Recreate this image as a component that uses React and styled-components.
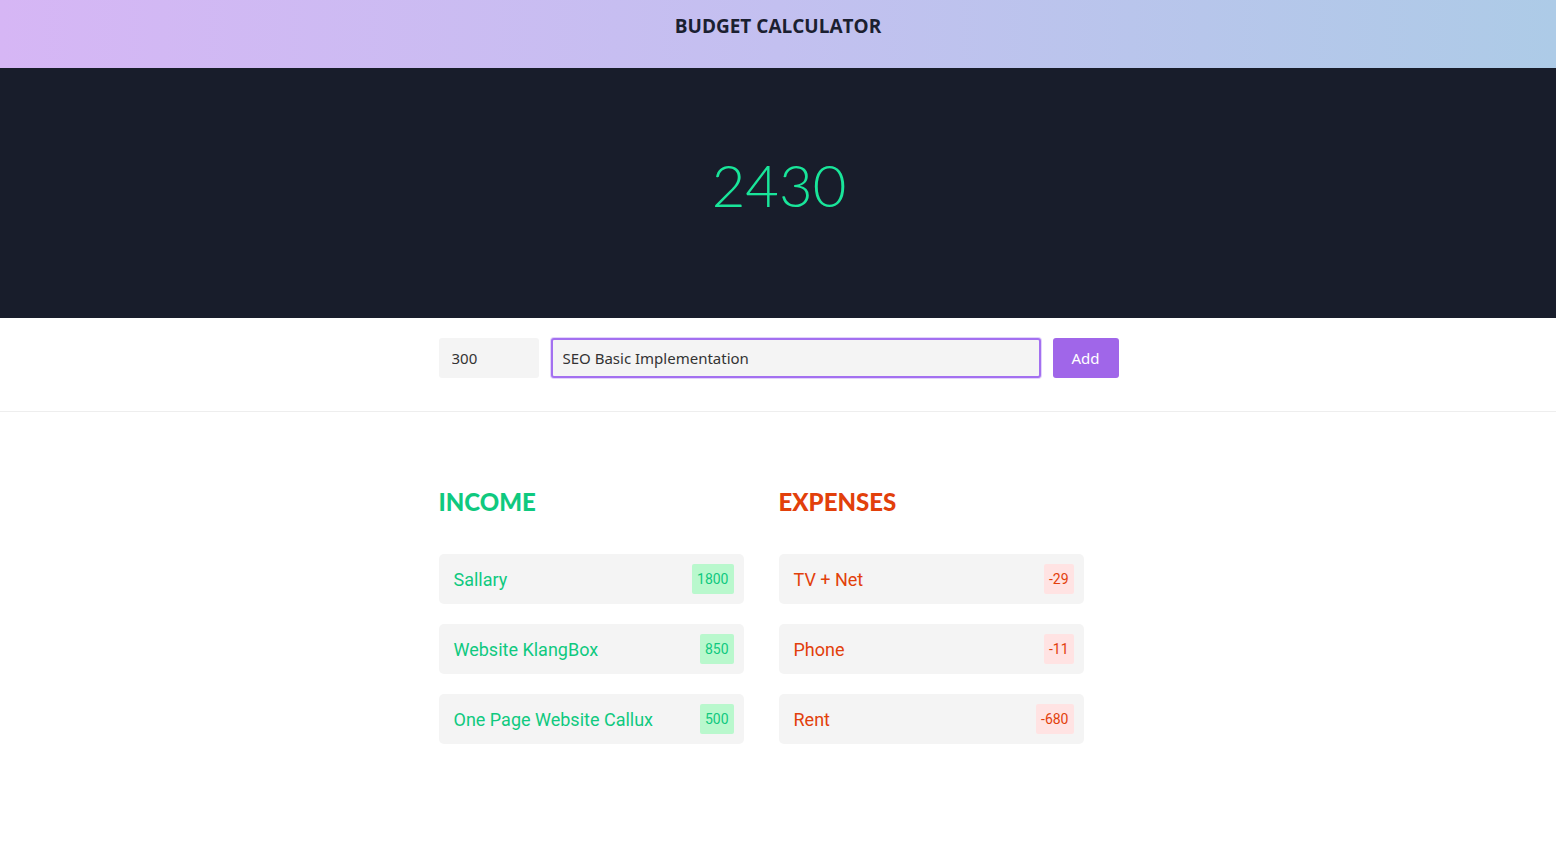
import React from "react";
import styled, { createGlobalStyle } from "styled-components";

const income = [
  { id: 1, title: "Sallary", value: 1800 },
  { id: 2, title: "Website KlangBox", value: 850 },
  { id: 3, title: "One Page Website Callux", value: 500 },
];

const expenses = [
  { id: 4, title: "TV + Net", value: -29 },
  { id: 5, title: "Phone", value: -11 },
  { id: 6, title: "Rent", value: -680 },
];

const GlobalStyle = createGlobalStyle`
  body {
    margin: 0;
    background: #ffffff;
    font-family: "Noto Sans", sans-serif;
  }
`;

const App = () => {
  const total = [...income, ...expenses].reduce((sum, each) => sum + each.value, 0);

  return (
    <>
      <GlobalStyle />
      <Header>
        <Title>BUDGET CALCULATOR</Title>
      </Header>
      <Balance>
        <Total>{total}</Total>
      </Balance>
      <FormBar>
        <FormRow>
          <AmountInput defaultValue="300" />
          <TextInput defaultValue="SEO Basic Implementation" />
          <AddButton>Add</AddButton>
        </FormRow>
      </FormBar>
      <Lists>
        <Column>
          <Heading kind="income">INCOME</Heading>
          {income.map((each) => (
            <Item key={each.id} kind="income">
              <span>{each.title}</span>
              <Badge kind="income">{each.value}</Badge>
            </Item>
          ))}
        </Column>
        <Column>
          <Heading kind="expense">EXPENSES</Heading>
          {expenses.map((each) => (
            <Item key={each.id} kind="expense">
              <span>{each.title}</span>
              <Badge kind="expense">{each.value}</Badge>
            </Item>
          ))}
        </Column>
      </Lists>
    </>
  );
};

const colors = {
  income: "#0fc97f",
  expense: "#e2400b",
  incomeBg: "#b9f8cd",
  expenseBg: "#ffe3e3",
};

const Header = styled.header`
  height: 68px;
  display: flex;
  justify-content: center;
  padding-top: 14px;
  box-sizing: border-box;
  background: linear-gradient(90deg, #d6b6f5 0%, #c3c0f0 50%, #adcbe7 100%);
`;

const Title = styled.h1`
  margin: 0;
  font-family: "Open Sans", sans-serif;
  font-size: 19px;
  line-height: 24px;
  font-weight: 700;
  color: #1b2030;
`;

const Balance = styled.section`
  height: 250px;
  display: flex;
  justify-content: center;
  align-items: center;
  padding: 0 0 18px 2px;
  box-sizing: border-box;
  background: #181d2b;
`;

const Total = styled.div`
  font-family: Lato, sans-serif;
  font-weight: 300;
  font-size: 58px;
  color: #19e59a;
`;

const FormBar = styled.section`
  padding: 20px 0 33px 1px;
  border-bottom: 1px solid #eeeeee;
`;

const FormRow = styled.div`
  width: 680px;
  margin: 0 auto;
  display: flex;
  gap: 12px;
`;

const AmountInput = styled.input`
  width: 100px;
  height: 40px;
  box-sizing: border-box;
  padding: 0 11px;
  border: 2px solid transparent;
  border-radius: 3px;
  background: #f4f4f4;
  font-family: "Noto Sans", sans-serif;
  font-size: 15px;
  color: #333;
  outline: none;
`;

const TextInput = styled(AmountInput)`
  flex: 1;
  padding: 0 10px;
  border-color: #a370f0;
  box-shadow: 0 0 0 1px #e3d3fb;
`;

const AddButton = styled.button`
  width: 66px;
  height: 40px;
  border: none;
  border-radius: 3px;
  background: #a066e9;
  color: #ffffff;
  font-family: "Noto Sans", sans-serif;
  font-size: 15px;
`;

const Lists = styled.section`
  width: 680px;
  margin: 0 auto;
  padding: 75px 0 0 1px;
  display: grid;
  grid-template-columns: 305px 305px;
  column-gap: 35px;
`;

const Column = styled.div`
  display: flex;
  flex-direction: column;
  gap: 20px;
`;

const Heading = styled.h2`
  margin: 0 0 18px;
  font-family: Lato, sans-serif;
  font-weight: 900;
  font-size: 24px;
  line-height: 29px;
  color: ${(props) => colors[props.kind]};
`;

const Item = styled.div`
  height: 50px;
  display: flex;
  align-items: center;
  justify-content: space-between;
  padding: 0 10px 0 15px;
  box-sizing: border-box;
  border-radius: 5px;
  background: #f4f4f4;
  font-family: Roboto, sans-serif;
  font-size: 18px;
  color: ${(props) => colors[props.kind]};
`;

const Badge = styled.span`
  height: 30px;
  display: flex;
  align-items: center;
  padding: 0 5px;
  border-radius: 2px;
  font-size: 14px;
  background: ${(props) => colors[props.kind + "Bg"]};
`;

export default App;
